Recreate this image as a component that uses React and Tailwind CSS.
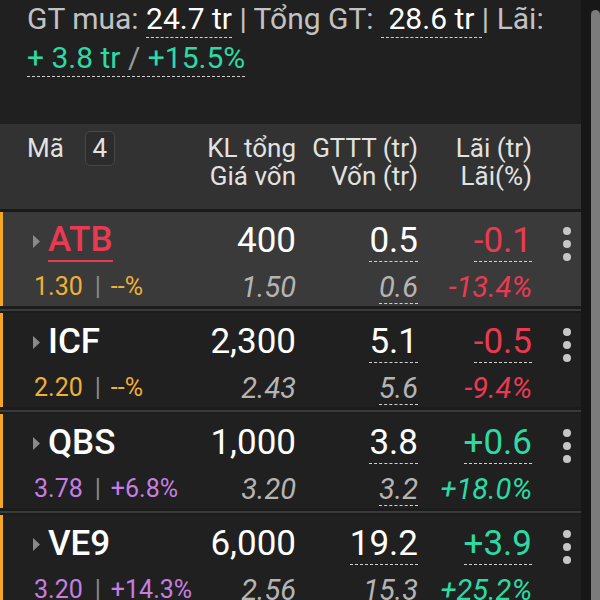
import React from 'react'

const rows = [
  {
    sym: 'ATB',
    price: '1.30',
    chg: '--%',
    pc: 'text-[#efb133]',
    kl: '400',
    gia: '1.50',
    gttt: '0.5',
    von: '0.6',
    lai: '-0.1',
    laiPct: '-13.4%',
    up: false,
    selected: true,
  },
  {
    sym: 'ICF',
    price: '2.20',
    chg: '--%',
    pc: 'text-[#efb133]',
    kl: '2,300',
    gia: '2.43',
    gttt: '5.1',
    von: '5.6',
    lai: '-0.5',
    laiPct: '-9.4%',
    up: false,
  },
  {
    sym: 'QBS',
    price: '3.78',
    chg: '+6.8%',
    pc: 'text-[#c77ee0]',
    kl: '1,000',
    gia: '3.20',
    gttt: '3.8',
    von: '3.2',
    lai: '+0.6',
    laiPct: '+18.0%',
    up: true,
  },
  {
    sym: 'VE9',
    price: '3.20',
    chg: '+14.3%',
    pc: 'text-[#c77ee0]',
    kl: '6,000',
    gia: '2.56',
    gttt: '19.2',
    von: '15.3',
    lai: '+3.9',
    laiPct: '+25.2%',
    up: true,
  },
]

function Kebab() {
  return (
    <div className="row-span-2 flex flex-col gap-[5px] mt-[6px] ml-[31px]">
      <span className="w-[8px] h-[8px] rounded-full bg-[#c6c6c6]" />
      <span className="w-[8px] h-[8px] rounded-full bg-[#c6c6c6]" />
      <span className="w-[8px] h-[8px] rounded-full bg-[#c6c6c6]" />
    </div>
  )
}

function Row({ r }) {
  const color = r.up ? 'text-[#2bdba3]' : 'text-[#ea3a52]'
  return (
    <div
      className={
        'border-l-[3px] border-[#f5a623] ' + (r.selected ? 'bg-[#3a3a3a]' : 'bg-[#202020]')
      }
    >
      <div className="grid grid-cols-[197px_96px_122px_114px_49px] grid-rows-[40px_32px] gap-y-[10px] pt-[9px] pb-[3px]">
        <div className="flex items-center pl-[30px] text-[35px] leading-[40px] font-medium">
          <svg width="7" height="13" viewBox="0 0 7 13" className="mr-[8px] shrink-0">
            <path d="M0 0 L7 6.5 L0 13 Z" fill="#8a8a8a" />
          </svg>
          {r.selected ? (
            <span className="inline-block text-[#ea3a52] border-b-2 border-[#ea3a52]">{r.sym}</span>
          ) : (
            <span className="text-white">{r.sym}</span>
          )}
        </div>
        <div className="text-right text-[35px] leading-[40px] text-white">{r.kl}</div>
        <div className="text-right text-[35px] leading-[40px] text-white">
          <span className="inline-block border-b border-dashed border-[#d0d0d0]">{r.gttt}</span>
        </div>
        <div className={'text-right text-[35px] leading-[40px] ' + color}>
          <span className="inline-block border-b border-dashed border-[#d0d0d0]">{r.lai}</span>
        </div>
        <Kebab />
        <div className={'pl-[31px] text-[25px] leading-[32px] whitespace-nowrap ' + r.pc}>
          {r.price}
          <span className="ml-[12px] mr-[10px] text-[#8a8a8a]">|</span>
          {r.chg}
        </div>
        <div className="text-right text-[29px] leading-[32px] italic text-[#b4b4b4]">{r.gia}</div>
        <div className="text-right text-[29px] leading-[32px] italic text-[#b4b4b4]">
          <span className="inline-block border-b border-dashed border-[#d0d0d0]">{r.von}</span>
        </div>
        <div className={'text-right text-[29px] leading-[32px] italic whitespace-nowrap ' + color}>
          {r.laiPct}
        </div>
      </div>
    </div>
  )
}

function Separator() {
  return (
    <div className="h-[7px] pt-[3px] bg-[#1c1c1c]">
      <div className="h-[2px] bg-[#3a3a3a]" />
    </div>
  )
}

export default function App() {
  return (
    <div className="w-[600px] h-[600px] overflow-hidden flex bg-[#202020] font-['Roboto',sans-serif]">
      <div className="w-[581px] shrink-0">
        <div className="h-[124px] pl-[27px] -mt-[1px] mb-[1px] text-[30px] leading-[39px] whitespace-pre">
          <div className="text-[#c2c2c2]">
            {'GT mua: '}
            <span className="text-white pb-[1px] border-b border-dashed border-[#d0d0d0]">24.7 tr</span>
            {' | Tổng GT: '}
            <span className="text-white pb-[1px] border-b border-dashed border-[#d0d0d0]">{' 28.6 tr '}</span>
            {'| Lãi:'}
          </div>
          <div>
            <span className="text-[#2bdba3] pb-[1px] border-b border-dashed border-[#d0d0d0]">
              {'+ 3.8 tr '}
              <span className="text-[#9a9a9a]">/</span>
              {' +15.5%'}
            </span>
          </div>
        </div>

        <div className="bg-[#323232] pt-[10px] pb-[19px] text-[26px] leading-[28px] text-[#e2e2e2]">
          <div className="grid grid-cols-[200px_96px_122px_114px_49px] grid-rows-[28px_28px]">
            <div className="flex items-center h-[28px] pl-[27px]">
              <span>Mã</span>
              <span className="ml-[21px] w-[30px] h-[35px] shrink-0 flex items-center justify-center rounded-[5px] border border-[#474747] bg-[#2c2c2c]">
                4
              </span>
            </div>
            <div className="text-right whitespace-nowrap">KL tổng</div>
            <div className="text-right whitespace-nowrap">GTTT (tr)</div>
            <div className="text-right whitespace-nowrap">Lãi (tr)</div>
            <div />
            <div />
            <div className="text-right whitespace-nowrap">Giá vốn</div>
            <div className="text-right whitespace-nowrap">Vốn (tr)</div>
            <div className="text-right whitespace-nowrap">Lãi(%)</div>
            <div />
          </div>
        </div>
        <div className="h-[3px] bg-[#1a1a1a]" />

        {rows.map((r, i) => (
          <div key={r.sym}>
            <Row r={r} />
            {i < rows.length - 1 && <Separator />}
          </div>
        ))}
      </div>
      <div className="w-[10px] shrink-0 bg-[#171717]" />
      <div className="w-[9px] shrink-0 pt-[10px] bg-[#171717]">
        <div className="h-full bg-[#7b7b7b] rounded-t-[5px]" />
      </div>
    </div>
  )
}
